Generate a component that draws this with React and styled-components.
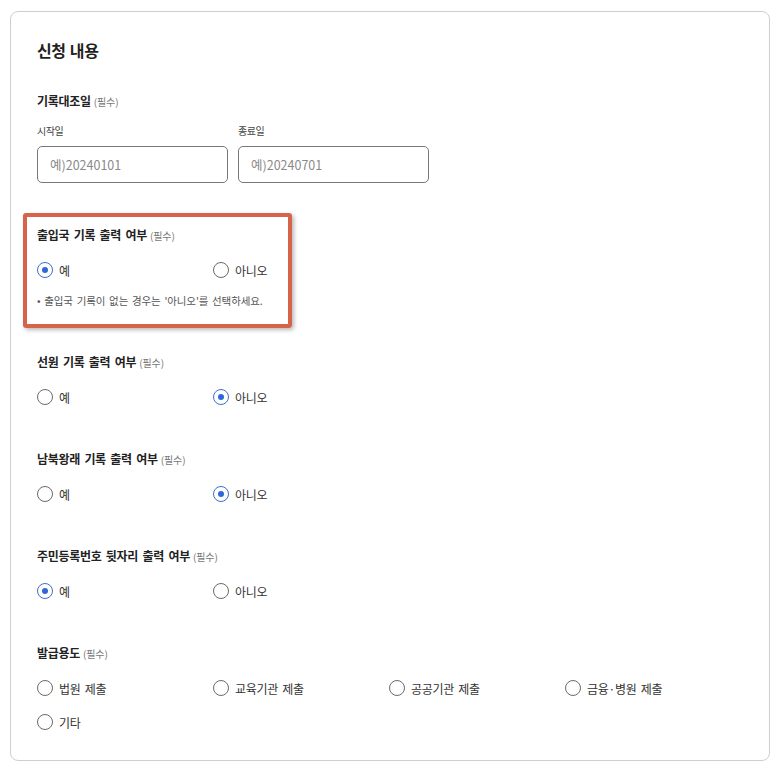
import styled, { createGlobalStyle } from "styled-components";

const GlobalStyle = createGlobalStyle`
  html, body {
    margin: 0;
    padding: 0;
    background: #ffffff;
  }
  body {
    font-family: "Noto Sans CJK KR", "Noto Sans", sans-serif;
    color: #222;
  }
`;

const Page = styled.div`
  padding: 11px 8px 10px 10px;
`;

const Card = styled.div`
  width: 760px;
  height: 750px;
  box-sizing: border-box;
  border: 1px solid #cfcfcf;
  border-radius: 8px;
  padding: 27px 28px 0 26px;
`;

const Title = styled.h2`
  margin: 0 0 31px;
  font-size: 16px;
  line-height: 22px;
  font-weight: 700;
  letter-spacing: -0.4px;
  word-spacing: 1px;
  color: #1f1f1f;
`;

const Section = styled.section`
  position: relative;
  display: flex;
  flex-direction: column;
  margin-bottom: 43px;

  &:last-child {
    margin-bottom: 0;
  }
`;

const Label = styled.div`
  font-size: 12px;
  line-height: 18px;
  height: 18px;
  font-weight: 700;
  letter-spacing: -0.3px;
  word-spacing: 2px;
  color: #222;
  margin-bottom: ${(p) => p.$gap || 16}px;

  span {
    font-size: 10px;
    font-weight: 400;
    letter-spacing: -0.1px;
    word-spacing: 0;
    color: #777;
    margin-left: 3px;
  }
`;

const DateRow = styled.div`
  display: flex;
  gap: 10px;
`;

const DateField = styled.label`
  display: flex;
  flex-direction: column;
  gap: 7px;
  width: 191px;
`;

const SubLabel = styled.span`
  font-size: 10px;
  line-height: 16px;
  height: 16px;
  letter-spacing: -0.4px;
  color: #444;
`;

const Input = styled.input`
  box-sizing: border-box;
  width: 191px;
  height: 37px;
  border: 1px solid #777;
  border-radius: 5px;
  padding: 0 12px;
  font-family: inherit;
  font-size: 12.5px;
  color: #333;
  outline: none;

  &::placeholder {
    color: #8a8a8a;
  }
`;

const Options = styled.div`
  display: grid;
  grid-template-columns: repeat(4, 176px);
  row-gap: 14px;
`;

const Option = styled.label`
  display: flex;
  align-items: center;
  gap: 6px;
  height: 20px;
  font-size: 12px;
  letter-spacing: -0.3px;
  word-spacing: 2px;
  color: #333;
`;

const Circle = styled.span`
  box-sizing: border-box;
  width: 16px;
  height: 16px;
  border-radius: 50%;
  border: 1.5px solid ${(p) => (p.$on ? "#3a6fd1" : "#6a6a6a")};
  display: flex;
  align-items: center;
  justify-content: center;
  flex-shrink: 0;

  &::after {
    content: "";
    width: 6px;
    height: 6px;
    border-radius: 50%;
    background: #2f67d4;
    display: ${(p) => (p.$on ? "block" : "none")};
  }
`;

const Note = styled.p`
  margin: 12px 0 0;
  font-size: 10.5px;
  line-height: 18px;
  height: 18px;
  color: #555;
  letter-spacing: -0.1px;
  word-spacing: 1.5px;
`;

const Highlight = styled.div`
  position: absolute;
  left: -14px;
  top: -13px;
  width: 269px;
  height: 115px;
  box-sizing: border-box;
  border: 4px solid #d6644a;
  border-radius: 3px;
  box-shadow: 2px 2px 4px rgba(0, 0, 0, 0.28);
  pointer-events: none;
`;

function Radio({ on, children }) {
  return (
    <Option>
      <Circle $on={on} />
      {children}
    </Option>
  );
}

function YesNo({ value }) {
  return (
    <Options>
      <Radio on={value === "yes"}>예</Radio>
      <Radio on={value === "no"}>아니오</Radio>
    </Options>
  );
}

const purposes = ["법원 제출", "교육기관 제출", "공공기관 제출", "금융·병원 제출", "기타"];

export default function App() {
  return (
    <Page>
      <GlobalStyle />
      <Card>
        <Title>신청 내용</Title>

        <Section>
          <Label $gap={13}>
            기록대조일<span>(필수)</span>
          </Label>
          <DateRow>
            <DateField>
              <SubLabel>시작일</SubLabel>
              <Input placeholder="예)20240101" />
            </DateField>
            <DateField>
              <SubLabel>종료일</SubLabel>
              <Input placeholder="예)20240701" />
            </DateField>
          </DateRow>
        </Section>

        <Section>
          <Highlight />
          <Label>
            출입국 기록 출력 여부<span>(필수)</span>
          </Label>
          <YesNo value="yes" />
          <Note>• 출입국 기록이 없는 경우는 '아니오'를 선택하세요.</Note>
        </Section>

        <Section>
          <Label>
            선원 기록 출력 여부<span>(필수)</span>
          </Label>
          <YesNo value="no" />
        </Section>

        <Section>
          <Label>
            남북왕래 기록 출력 여부<span>(필수)</span>
          </Label>
          <YesNo value="no" />
        </Section>

        <Section>
          <Label>
            주민등록번호 뒷자리 출력 여부<span>(필수)</span>
          </Label>
          <YesNo value="yes" />
        </Section>

        <Section>
          <Label>
            발급용도<span>(필수)</span>
          </Label>
          <Options>
            {purposes.map((p) => (
              <Radio key={p}>{p}</Radio>
            ))}
          </Options>
        </Section>
      </Card>
    </Page>
  );
}
